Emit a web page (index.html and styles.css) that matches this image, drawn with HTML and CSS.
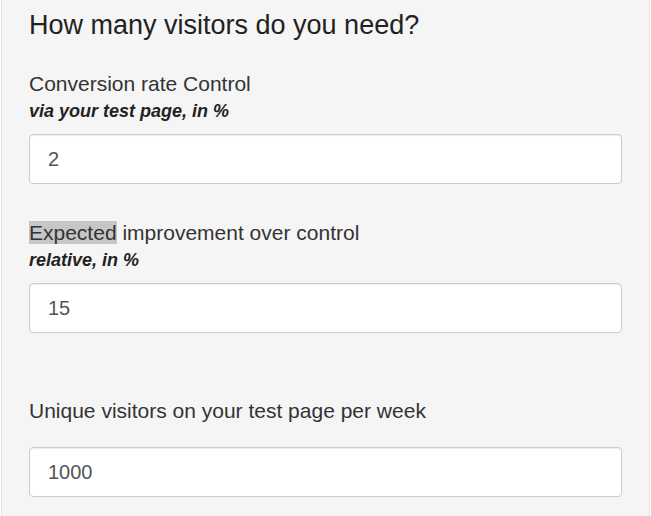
FILE: index.html
```html
<!DOCTYPE html>
<html lang="en">
<head>
  <meta charset="UTF-8">
  <title>Sample size</title>
  <link rel="stylesheet" href="styles.css">
</head>
<body>

  <div class="well">
    <h2>How many visitors do you need?</h2>

    <div class="field first">
      <label class="label" for="rate">Conversion rate Control</label>
      <div class="hint">via your test page, in %</div>
      <input class="form-control" type="text" id="rate" value="2">
    </div>

    <div class="field">
      <label class="label" for="lift"><span class="mark">Expected</span> improvement over control</label>
      <div class="hint">relative, in %</div>
      <input class="form-control" type="text" id="lift" value="15">
    </div>

    <div class="field plain">
      <label class="label" for="visitors">Unique visitors on your test page per week</label>
      <input class="form-control" type="text" id="visitors" value="1000">
    </div>
  </div>

</body>
</html>
```

FILE: styles.css
```css
html, body {
  margin: 0;
  height: 100%;
}
body {
  font-family: "Liberation Sans", Arial, sans-serif;
  color: #333;
  background: #fff;
}
.well {
  box-sizing: border-box;
  min-height: 100%;
  margin: 0 1px;
  padding: 9px 27px 0;
  background: #f5f5f5;
  border-left: 1px solid #e3e3e3;
  border-right: 1px solid #e3e3e3;
}
h2 {
  margin: 0;
  font-size: 27px;
  font-weight: normal;
  line-height: 32px;
  color: #222;
}
.field {
  margin-top: 37px;
}
.field.first {
  margin-top: 31px;
}
.field.plain {
  margin-top: 66px;
}
.label {
  display: block;
  font-size: 21px;
  line-height: 24px;
}
.plain .label {
  margin-bottom: 24px;
}
.mark {
  background: #c6c6c6;
}
.hint {
  margin: 2px 0 10px;
  font-size: 18px;
  line-height: 26px;
  font-weight: bold;
  font-style: italic;
  color: #222;
}
.form-control {
  display: block;
  box-sizing: border-box;
  width: 100%;
  height: 50px;
  padding: 0 18px;
  font-family: inherit;
  font-size: 20px;
  color: #555;
  background: #fff;
  border: 1px solid #ccc;
  border-radius: 4px;
  box-shadow: inset 0 1px 1px rgba(0, 0, 0, .075);
  outline: none;
}
```
